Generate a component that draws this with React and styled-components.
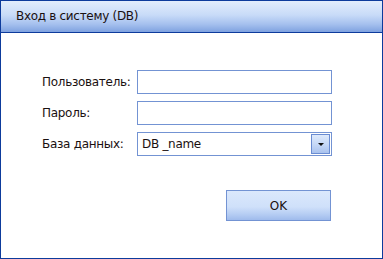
import React from "react";
import styled, { createGlobalStyle } from "styled-components";

const Global = createGlobalStyle`
  html, body { margin: 0; padding: 0; background: #fff; }
  * { box-sizing: border-box; }
`;

const Window = styled.div`
  width: 383px;
  height: 259px;
  border: 1px solid #0d3b9c;
  background: #fff;
  display: flex;
  flex-direction: column;
  font-family: "DejaVu Sans", Verdana, sans-serif;
  font-size: 12px;
  letter-spacing: -0.3px;
  color: #1a1010;
`;

const TitleBar = styled.div`
  height: 32px;
  flex: none;
  border-bottom: 1px solid #0d3b9c;
  background: linear-gradient(to bottom, #e2edfc 0%, #c8dbf8 45%, #a5c0ee 75%, #7fa2e0 100%);
  display: flex;
  align-items: center;
  padding-left: 15px;
  padding-bottom: 1px;
`;

const Body = styled.div`
  flex: 1;
  padding: 37px 51px 0 41px;
  display: flex;
  flex-direction: column;
`;

const Form = styled.div`
  display: grid;
  grid-template-columns: 95px 195px;
  grid-auto-rows: 24px;
  row-gap: 7px;
  align-items: center;
`;

const Label = styled.label`
  white-space: nowrap;
`;

const Field = styled.div`
  height: 24px;
  border: 1px solid #7393d3;
  background: #fff;
  display: flex;
  align-items: center;
  padding-left: 4px;
  padding-right: 1px;
`;

const FieldText = styled.span`
  flex: 1;
`;

const DropButton = styled.div`
  width: 19px;
  height: 20px;
  border: 1px solid #6a8cd2;
  background: linear-gradient(to bottom, #dfeafb 0%, #c4d7f6 55%, #a9c2ee 100%);
  display: flex;
  align-items: center;
  justify-content: center;
`;

const Arrow = styled.div`
  width: 0;
  height: 0;
  border-left: 3px solid transparent;
  border-right: 3px solid transparent;
  border-top: 3px solid #111;
`;

const Actions = styled.div`
  display: flex;
  justify-content: flex-end;
  padding-top: 34px;
`;

const Button = styled.button`
  width: 105px;
  height: 31px;
  border: 1px solid #7393d3;
  background: linear-gradient(to bottom, #dbe8fc 0%, #cfe0fa 55%, #b6cdf3 80%, #9fbbec 100%);
  font-family: "DejaVu Sans", Verdana, sans-serif;
  font-size: 12px;
  color: #1a1010;
  padding: 0;
`;

export default function App() {
  return (
    <>
      <Global />
      <Window>
        <TitleBar>Вход в систему (DB)</TitleBar>
        <Body>
          <Form>
            <Label>Пользователь:</Label>
            <Field />
            <Label>Пароль:</Label>
            <Field />
            <Label>База данных:</Label>
            <Field>
              <FieldText>DB _name</FieldText>
              <DropButton>
                <Arrow />
              </DropButton>
            </Field>
          </Form>
          <Actions>
            <Button>OK</Button>
          </Actions>
        </Body>
      </Window>
    </>
  );
}
